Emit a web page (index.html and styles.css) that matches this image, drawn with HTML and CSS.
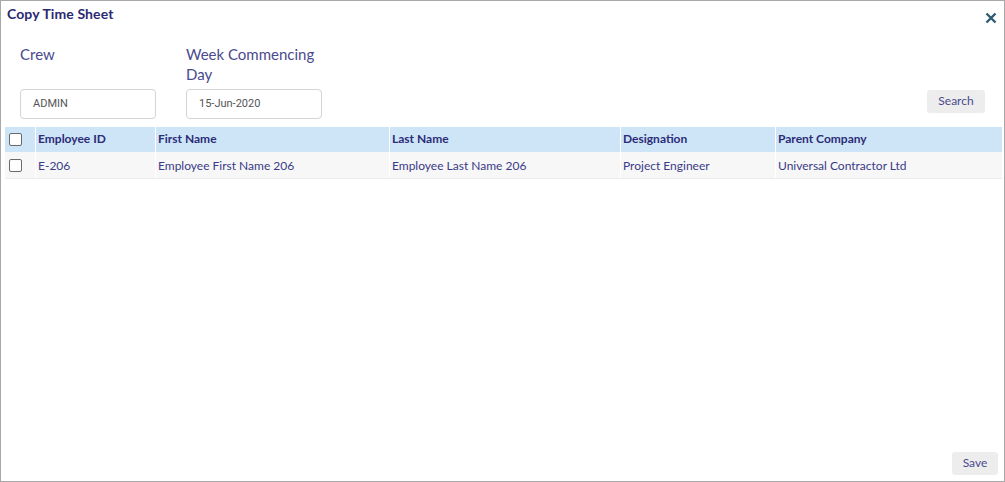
FILE: index.html
```html
<!DOCTYPE html>
<html>
<head>
<meta charset="utf-8">
<link rel="stylesheet" href="styles.css">
</head>
<body>
<div class="dialog">
  <div class="head">
    <div class="title">Copy Time Sheet</div>
    <div class="close"><svg width="12" height="12" viewBox="0 0 12 12"><path d="M1.5 1.5 L10.5 10.5 M10.5 1.5 L1.5 10.5" stroke="#2f5b70" stroke-width="2.4" stroke-linecap="butt"/></svg></div>
  </div>
  <div class="form">
    <div class="field">
      <div class="label">Crew</div>
      <div class="input">ADMIN</div>
    </div>
    <div class="field">
      <div class="label">Week Commencing Day</div>
      <div class="input">15-Jun-2020</div>
    </div>
    <div class="spacer"></div>
    <div class="btn search">Search</div>
  </div>
  <div class="table">
    <div class="row hdr">
      <div class="c c0"><span class="cb"></span></div>
      <div class="c c1">Employee ID</div>
      <div class="c c2">First Name</div>
      <div class="c c3">Last Name</div>
      <div class="c c4">Designation</div>
      <div class="c c5">Parent Company</div>
    </div>
    <div class="row body">
      <div class="c c0"><span class="cb"></span></div>
      <div class="c c1">E-206</div>
      <div class="c c2">Employee First Name 206</div>
      <div class="c c3">Employee Last Name 206</div>
      <div class="c c4">Project Engineer</div>
      <div class="c c5">Universal Contractor Ltd</div>
    </div>
  </div>
  <div class="foot">
    <div class="btn save">Save</div>
  </div>
</div>
</body>
</html>
```
FILE: styles.css
```css
* { box-sizing: border-box; }
body { margin: 0; font-family: Lato, "Open Sans", sans-serif; background: #fff; }
.dialog {
  width: 1005px; height: 482px;
  border: 1px solid #a8a8a8;
  display: flex; flex-direction: column;
}
.head {
  display: flex; justify-content: space-between; align-items: flex-start;
  height: 28px; padding: 4px 0 0 6px;
}
.title { font-size: 14px; font-weight: 700; color: #2a2a72; line-height: 18px; letter-spacing: 0.1px; }
.close { width: 12px; height: 12px; margin: 7px 7px 0 0; display: flex; }
.form {
  display: flex; align-items: flex-end;
  padding: 15px 19px 0 19px;
}
.field { width: 136px; margin-right: 30px; display: flex; flex-direction: column; }
.label { font-size: 15px; line-height: 20px; color: #4a4a8c; height: 40px; margin-bottom: 5px; padding-right: 2px; }
.input {
  height: 30px; border: 1px solid #d4d4d4; border-radius: 4px;
  font-family: Roboto, "Liberation Sans", sans-serif; font-size: 11px; color: #555;
  line-height: 28px; padding-left: 12px;
}
.spacer { flex: 1; }
.btn {
  background: #ededed; border-radius: 3px; color: #4a4a8c;
  font-size: 12px; height: 23px; line-height: 22px; padding: 0 10px;
}
.search { margin-bottom: 6px; width: 58px; text-align: center; padding: 0; }
.table { margin: 8px 2px 0 4px; }
.row { display: flex; }
.hdr { background: #cde5f7; height: 25px; font-weight: 700; color: #2c2c78; }
.body { background: #f7f7f7; height: 27px; color: #3a3a88; border-bottom: 1px solid #ececec; }
.c { font-size: 12px; display: flex; align-items: center; padding-left: 2px; padding-bottom: 2px; border-left: 1px solid #fff; }
.body .c { padding-bottom: 0; }
.c0 { width: 30px; border-left: none; padding-left: 4px; padding-bottom: 0; }
.c1 { width: 120px; }
.c2 { width: 234px; }
.c3 { width: 231px; }
.c4 { width: 155px; }
.c5 { flex: 1; }
.cb { width: 13px; height: 13px; border: 1px solid #6a6a6a; border-radius: 2px; background: #fff; }
.foot { margin-top: auto; display: flex; justify-content: flex-end; padding: 0 6px 6px 0; }
.save { width: 46px; text-align: center; padding: 0; }
```
